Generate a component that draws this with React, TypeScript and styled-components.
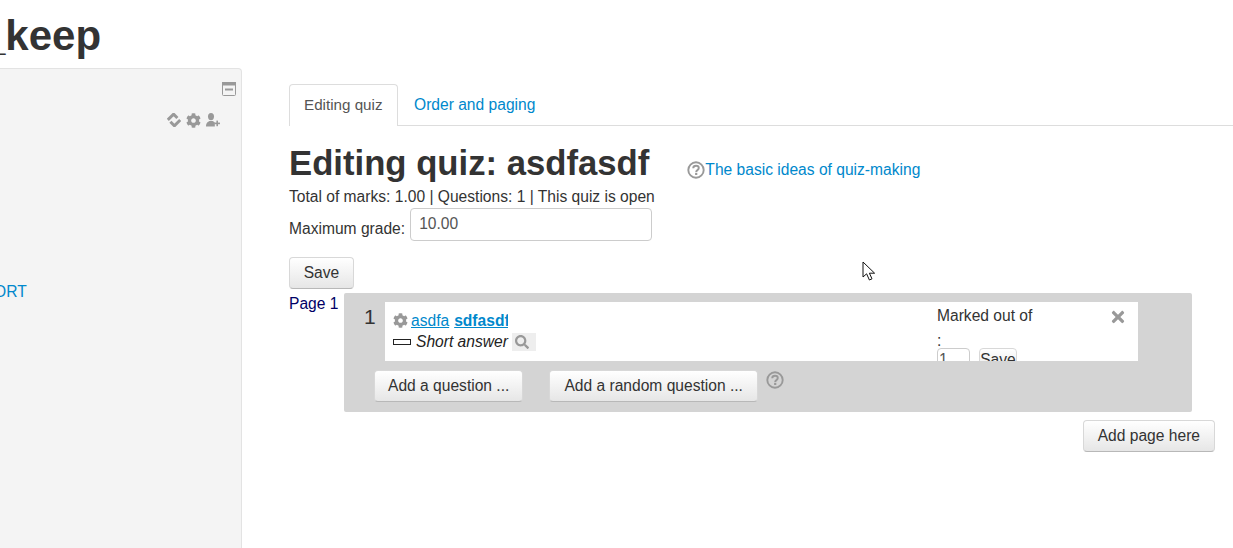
import styled, { createGlobalStyle } from 'styled-components';
import { FaCog, FaSearch, FaTimes } from 'react-icons/fa';

const GlobalStyle = createGlobalStyle`
  html, body {
    margin: 0;
    padding: 0;
    height: 100%;
    overflow: hidden;
    background: #fff;
    font-family: "Liberation Sans", Arial, sans-serif;
    font-size: 15.6px;
    line-height: 20px;
    color: #333;
  }
`;

function HelpIcon() {
  return (
    <svg width="18" height="18" viewBox="0 0 18 18" fill="none">
      <circle cx="9" cy="9" r="7.7" stroke="#999" strokeWidth="1.9" />
      <path
        d="M6.2 7.2C6.3 5.6 7.5 4.8 9 4.8c1.6 0 2.8.9 2.8 2.3 0 2-2.6 2-2.6 3.8"
        stroke="#999"
        strokeWidth="1.9"
      />
      <rect x="8.1" y="11.8" width="2.2" height="2.2" fill="#999" />
    </svg>
  );
}

function HideBlockIcon() {
  return (
    <svg width="14" height="14" viewBox="0 0 14 14">
      <rect x="0.5" y="0.5" width="13" height="13" rx="1" fill="#f4f4f4" stroke="#999" />
      <rect x="0" y="0" width="14" height="3.5" fill="#999" />
      <rect x="3" y="6.5" width="8" height="2" fill="#999" />
    </svg>
  );
}

function MoveBlockIcon() {
  return (
    <svg width="14" height="14" viewBox="0 0 14 14" fill="none">
      <path d="M0.8 6.8L6.6 1.2 10.4 5" stroke="#999" strokeWidth="3" />
      <path d="M3.4 8.8L7.4 12.8 13.2 7" stroke="#999" strokeWidth="3" />
    </svg>
  );
}

function AssignRolesIcon() {
  return (
    <svg width="14" height="14" viewBox="0 0 14 14" fill="#999">
      <ellipse cx="5" cy="3.6" rx="3" ry="3.6" />
      <path d="M0 13.6C0 10 1.6 9 3.4 8h3.2c1 .5 1.8 1 2.2 1.6v4z" />
      <rect x="8.4" y="9.6" width="5.6" height="1.6" />
      <rect x="10.4" y="7.6" width="1.6" height="5.6" />
    </svg>
  );
}

function ShortAnswerIcon() {
  return (
    <svg width="18" height="6" viewBox="0 0 18 6">
      <rect x="0.5" y="0.5" width="17" height="5" fill="#fff" stroke="#222" />
    </svg>
  );
}

function Cursor() {
  return (
    <CursorWrap>
      <svg width="14" height="20" viewBox="0 0 14 20">
        <path
          d="M1 1v15l3.6-3.2L7.4 19l2.6-1.2-2.6-5.6H12.6z"
          fill="#fff"
          stroke="#111"
          strokeWidth="1"
          strokeLinejoin="round"
        />
      </svg>
    </CursorWrap>
  );
}

export default function App() {
  return (
    <>
      <GlobalStyle />
      <Page>
        <PageTitle>_keep</PageTitle>
        <Columns>
          <Sidebar>
            <SidebarTop>
              <HideBlockIcon />
            </SidebarTop>
            <SidebarTools>
              <MoveBlockIcon />
              <FaCog size={15} color="#999" />
              <AssignRolesIcon />
            </SidebarTools>
            <SideLink href="#">REPORT</SideLink>
          </Sidebar>
          <Main>
            <Tabs>
              <ActiveTab>Editing quiz</ActiveTab>
              <TabLink href="#">Order and paging</TabLink>
            </Tabs>
            <TitleRow>
              <Heading>Editing quiz: asdfasdf</Heading>
              <HelpLink href="#">
                <HelpIcon />
                The basic ideas of quiz-making
              </HelpLink>
            </TitleRow>
            <Stats>Total of marks: 1.00 | Questions: 1 | This quiz is open</Stats>
            <GradeRow>
              <label>Maximum grade:</label>
              <GradeInput>10.00</GradeInput>
            </GradeRow>
            <SaveButton>Save</SaveButton>
            <PageRow>
              <PageLabel>Page 1</PageLabel>
              <QuizBox>
                <QuestionRow>
                  <Slot>1</Slot>
                  <Question>
                    <QuestionInfo>
                      <NameLine>
                        <FaCog size={15} color="#999" />
                        <NameLink href="#">asdfa</NameLink>
                        <BoldLink href="#">sdfasdf</BoldLink>
                      </NameLine>
                      <TypeLine>
                        <ShortAnswerIcon />
                        <TypeName>Short answer</TypeName>
                        <PreviewChip>
                          <FaSearch size={14} color="#999" />
                        </PreviewChip>
                      </TypeLine>
                    </QuestionInfo>
                    <Marks>
                      <MarkedLabel>Marked out of</MarkedLabel>
                      <div>:</div>
                      <MarkControls>
                        <MarkInput>1</MarkInput>
                        <MarkSave>Save</MarkSave>
                      </MarkControls>
                    </Marks>
                    <CloseLink>
                      <FaTimes size={18} color="#999" />
                    </CloseLink>
                  </Question>
                </QuestionRow>
                <AddRow>
                  <Button>Add a question ...</Button>
                  <Button $wide>Add a random question ...</Button>
                  <HelpSpot>
                    <HelpIcon />
                  </HelpSpot>
                </AddRow>
              </QuizBox>
            </PageRow>
            <AddPageRow>
              <Button $wide>Add page here</Button>
            </AddPageRow>
          </Main>
        </Columns>
        <Cursor />
      </Page>
    </>
  );
}

const Page = styled.div`
  position: relative;
  width: 1233px;
  height: 548px;
  overflow: hidden;
`;

const PageTitle = styled.h1`
  margin: 0 0 0 -18px;
  height: 68px;
  padding-top: 12px;
  box-sizing: border-box;
  font-size: 42px;
  line-height: 48px;
  font-weight: 700;
  color: #333;
`;

const Columns = styled.div`
  display: flex;
  gap: 47px;
`;

const Sidebar = styled.aside`
  width: 242px;
  height: 480px;
  box-sizing: border-box;
  padding: 13px 5px 0 0;
  background: #f4f4f4;
  border: 1px solid #e3e3e3;
  border-left: none;
  border-bottom: none;
  border-radius: 0 4px 0 0;
  overflow: hidden;
`;

const SidebarTop = styled.div`
  display: flex;
  justify-content: flex-end;
  height: 14px;
`;

const SidebarTools = styled.div`
  display: flex;
  justify-content: flex-end;
  align-items: center;
  gap: 5px;
  height: 14px;
  margin-top: 17px;
  padding-right: 16px;
`;

const SideLink = styled.a`
  display: block;
  margin: 155px 0 0 -38px;
  color: #0088cc;
  text-decoration: none;
`;

const Main = styled.main`
  width: 944px;
  padding-top: 16px;
`;

const Tabs = styled.nav`
  display: flex;
  height: 42px;
  box-sizing: border-box;
  border-bottom: 1px solid #ddd;
`;

const ActiveTab = styled.div`
  width: 109px;
  height: 42px;
  box-sizing: border-box;
  padding: 10px 0 0 14px;
  font-size: 15.2px;
  color: #555;
  background: #fff;
  border: 1px solid #ddd;
  border-bottom: none;
  border-radius: 4px 4px 0 0;
`;

const TabLink = styled.a`
  padding: 11px 16px;
  color: #0088cc;
  text-decoration: none;
`;

const TitleRow = styled.div`
  display: flex;
  align-items: flex-start;
  gap: 38px;
  margin-top: 16px;
  height: 44px;
`;

const Heading = styled.h2`
  margin: 0;
  font-size: 34.7px;
  line-height: 42px;
  font-weight: 700;
  color: #333;
`;

const HelpLink = styled.a`
  display: flex;
  align-items: center;
  margin-top: 18px;
  color: #0088cc;
  text-decoration: none;
`;

const Stats = styled.div`
  margin-top: 1px;
  height: 21px;
`;

const GradeRow = styled.div`
  display: flex;
  align-items: flex-start;
  gap: 5px;
  height: 33px;

  label {
    margin-top: 11px;
  }
`;

const GradeInput = styled.div`
  width: 242px;
  height: 33px;
  box-sizing: border-box;
  padding: 5px 8px;
  color: #555;
  background: #fff;
  border: 1px solid #ccc;
  border-radius: 4px;
`;

const Button = styled.div<{ $wide?: boolean }>`
  display: inline-block;
  box-sizing: border-box;
  height: 32px;
  padding: 5px ${(p) => (p.$wide ? '14px' : '13px')};
  color: #333;
  white-space: nowrap;
  background: linear-gradient(#fff, #e6e6e6);
  border: 1px solid #d8d8d8;
  border-bottom-color: #b8b8b8;
  border-radius: 4px;
`;

const SaveButton = styled(Button)`
  margin-top: 16px;
  display: block;
  width: 65px;
  text-align: center;
  padding: 5px 0;
`;

const PageRow = styled.div`
  display: flex;
  gap: 5px;
  margin-top: 4px;
`;

const PageLabel = styled.div`
  width: 50px;
  color: #000066;
  line-height: 22px;
`;

const QuizBox = styled.div`
  width: 848px;
  height: 119px;
  box-sizing: border-box;
  padding-top: 9px;
  background: #d4d4d4;
  border-radius: 2px;
`;

const QuestionRow = styled.div`
  display: flex;
`;

const Slot = styled.div`
  width: 41px;
  padding-left: 20px;
  box-sizing: border-box;
  font-size: 21px;
  line-height: 30px;
`;

const Question = styled.div`
  position: relative;
  display: flex;
  width: 753px;
  height: 59px;
  background: #fff;
  overflow: hidden;
`;

const QuestionInfo = styled.div`
  width: 544px;
  padding: 8px 0 0 8px;
`;

const NameLine = styled.div`
  display: flex;
  align-items: center;
  height: 21px;
  gap: 3px;
`;

const NameLink = styled.a`
  color: #0088cc;
  text-decoration: underline;
`;

const BoldLink = styled(NameLink)`
  display: block;
  width: 54px;
  margin-left: 2px;
  overflow: hidden;
  font-weight: 700;
`;

const TypeLine = styled.div`
  display: flex;
  align-items: center;
  height: 21px;
  gap: 4px;
  color: #222;
`;

const TypeName = styled.em`
  margin-left: 1px;
`;

const PreviewChip = styled.span`
  display: flex;
  align-items: center;
  width: 24px;
  height: 18px;
  padding-left: 3px;
  box-sizing: border-box;
  background: #eee;
`;

const Marks = styled.div`
  width: 102px;
  color: #333;
`;

const MarkedLabel = styled.div`
  margin-top: 4px;
  margin-bottom: 5px;
`;

const MarkControls = styled.div`
  display: flex;
  gap: 9px;
  margin-top: -3px;
`;

const MarkInput = styled.div`
  width: 33px;
  height: 24px;
  box-sizing: border-box;
  padding: 1px 0 0 1px;
  color: #555;
  border: 1px solid #ccc;
  border-radius: 4px;
`;

const MarkSave = styled.div`
  width: 38px;
  height: 24px;
  box-sizing: border-box;
  padding-top: 1px;
  background: linear-gradient(#fff, #e6e6e6);
  border: 1px solid #d8d8d8;
  border-radius: 4px;
  text-align: center;
`;

const CloseLink = styled.div`
  position: absolute;
  top: 6px;
  right: 11px;
  height: 18px;
`;

const AddRow = styled.div`
  display: flex;
  gap: 26px;
  margin-top: 9px;
  padding-left: 30px;
`;

const HelpSpot = styled.div`
  margin: 1px 0 0 -18px;
`;

const AddPageRow = styled.div`
  display: flex;
  justify-content: flex-end;
  margin-top: 8px;
  padding-right: 18px;
`;

const CursorWrap = styled.div`
  position: absolute;
  left: 862px;
  top: 261px;
  line-height: 0;
`;
